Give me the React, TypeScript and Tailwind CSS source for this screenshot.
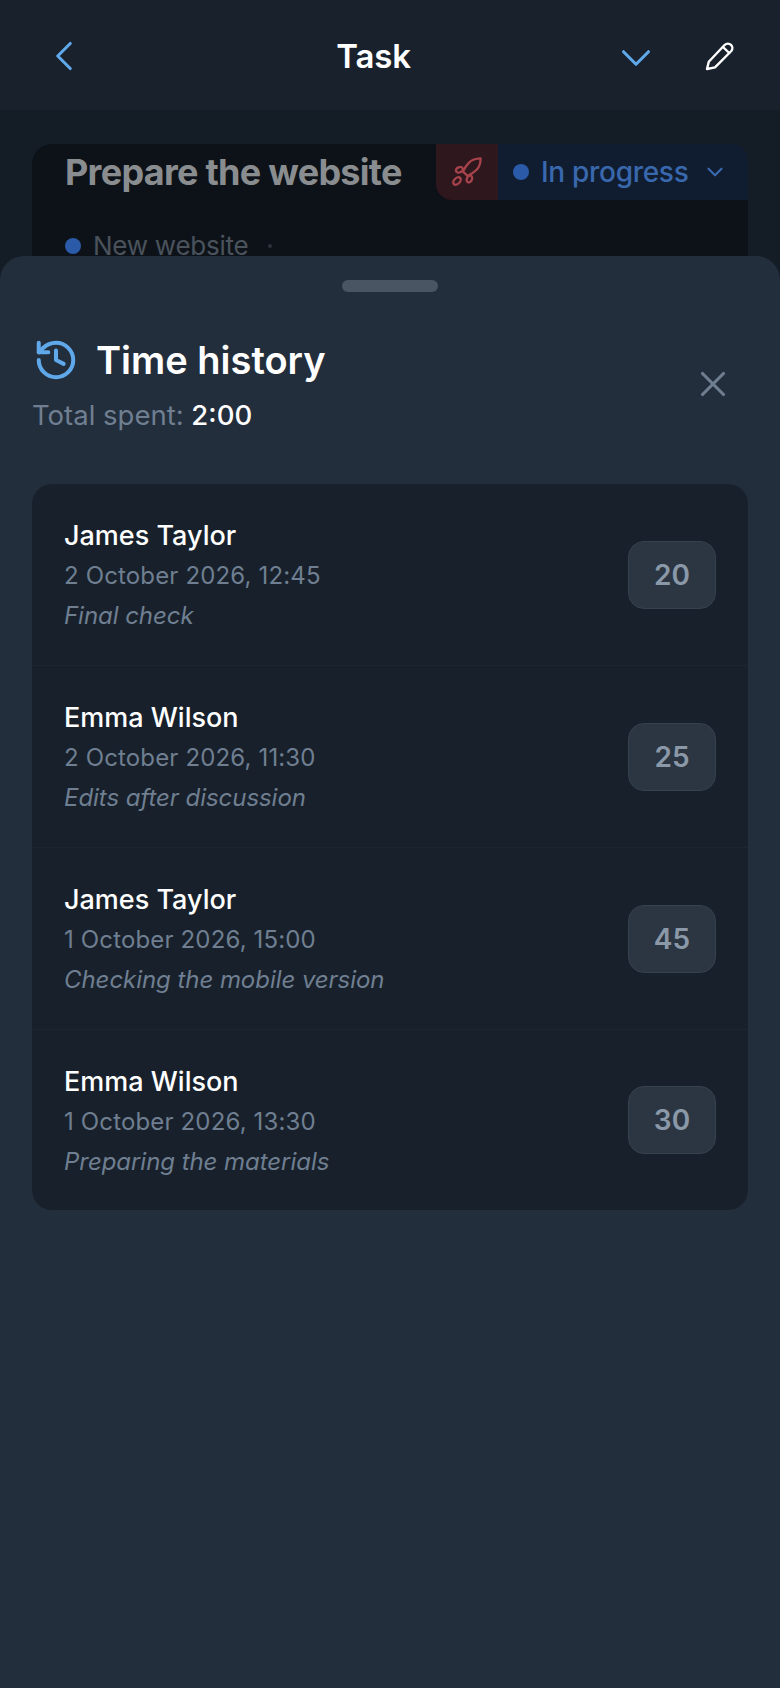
import { ChevronDown, ChevronLeft, History, X } from "lucide-react";

const ENTRIES = [
  { name: "James Taylor", date: "2 October 2026, 12:45", note: "Final check", minutes: 20 },
  { name: "Emma Wilson", date: "2 October 2026, 11:30", note: "Edits after discussion", minutes: 25 },
  { name: "James Taylor", date: "1 October 2026, 15:00", note: "Checking the mobile version", minutes: 45 },
  { name: "Emma Wilson", date: "1 October 2026, 13:30", note: "Preparing the materials", minutes: 30 },
];

function PencilIcon() {
  return (
    <svg viewBox="0 0 30 30" fill="none" stroke="currentColor" strokeWidth={2.4} strokeLinecap="round" strokeLinejoin="round" className="h-[30px] w-[30px] text-white">
      <path d="M2 28 L3.8 20.8 L19.8 3.8 a4.5 4.5 0 0 1 6.5 6.2 L10 26.4 Z" />
      <path d="M18 6 L24.2 12" />
    </svg>
  );
}

function RocketIcon() {
  return (
    <svg viewBox="0 0 30 30" fill="none" stroke="currentColor" strokeWidth={2.3} strokeLinecap="round" strokeLinejoin="round" className="h-[30px] w-[30px] text-[#a8434b]">
      <path d="M28.6 1.4 C23.5 1.6 19.6 3 17 5.6 C14.4 8.2 12.4 11.4 11 14.6 L15.6 18.8 C18.8 17.4 22 15.4 24.6 12.8 C27.2 10.2 28.6 6.4 28.6 1.4 Z" />
      <ellipse cx="7.4" cy="12.8" rx="3.6" ry="2.6" transform="rotate(-20 7.4 12.8)" />
      <ellipse cx="17.4" cy="22" rx="3.6" ry="2.6" transform="rotate(-65 17.4 22)" />
      <ellipse cx="5" cy="24" rx="4.4" ry="2.9" transform="rotate(-45 5 24)" />
    </svg>
  );
}

function Header() {
  return (
    <header className="flex h-[110px] items-center justify-between bg-[#18212c] pl-[39px] pr-[45px] pt-[2px]">
      <ChevronLeft className="h-[50px] w-[50px] text-[#5fa8ea]" strokeWidth={1.5} />
      <h1 className="ml-[47px] text-[33px] font-semibold leading-none tracking-[-0.2px] text-white">Task</h1>
      <div className="flex items-center gap-[44px]">
        <ChevronDown className="h-[50px] w-[50px] translate-y-[2px] text-[#5fa8ea]" strokeWidth={1.5} />
        <PencilIcon />
      </div>
    </header>
  );
}

function TaskCard() {
  return (
    <div className="mx-[32px] mt-[34px] h-[200px] rounded-t-[20px] bg-[#0d1219]">
      <div className="flex h-[56px] items-center justify-between">
        <h2 className="pl-[33px] text-[36px] font-bold leading-none tracking-[-0.72px] text-[#8a8d8f]">Prepare the website</h2>
        <div className="flex h-full w-[312px] overflow-hidden rounded-bl-[16px] rounded-tr-[16px]">
          <div className="flex w-[62px] items-center justify-center bg-[#2e171d]">
            <RocketIcon />
          </div>
          <div className="flex flex-1 items-center bg-[#101d30] pl-[15px]">
            <span className="h-[16px] w-[16px] rounded-full bg-[#2a5aa8]" />
            <span className="ml-[12px] text-[28px] font-medium leading-none tracking-[-0.3px] text-[#3a68ae]">In progress</span>
            <ChevronDown className="ml-[14px] h-[26px] w-[26px] text-[#3a68ae]" strokeWidth={2} />
          </div>
        </div>
      </div>
      <div className="mt-[33px] flex items-center pl-[33px]">
        <span className="h-[16px] w-[16px] rounded-full bg-[#2a5aa8]" />
        <span className="ml-[12px] text-[26px] leading-none tracking-[-0.25px] text-[#4a525c]">New website</span>
        <span className="ml-[20px] h-[4px] w-[4px] rounded-full bg-[#2c333c]" />
      </div>
    </div>
  );
}

function HistoryRow({ name, date, note, minutes }: (typeof ENTRIES)[number]) {
  return (
    <li className="flex h-[182px] items-center justify-between border-b border-[#1c2530] px-[32px] last:h-[180px] last:border-b-0">
      <div className="pt-[3px]">
        <p className="text-[27px] font-medium leading-[40px] text-white">{name}</p>
        <p className="text-[24px] leading-[40px] tracking-[0.15px] text-[#6f7f91]">{date}</p>
        <p className="text-[24px] italic leading-[40px] tracking-[-0.05px] text-[#6f7f91]">{note}</p>
      </div>
      <div className="flex h-[68px] w-[88px] items-center justify-center rounded-[16px] border border-[#36414e] bg-[#2b3642] text-[28px] font-semibold text-[#8a98a8]">
        {minutes}
      </div>
    </li>
  );
}

export default function App() {
  return (
    <div className="relative h-[1688px] w-[780px] overflow-hidden bg-[#141c26] font-['Inter',sans-serif]">
      <Header />
      <TaskCard />
      <section className="absolute inset-x-0 bottom-0 top-[256px] rounded-t-[24px] bg-[#232e3c] px-[32px]">
        <div className="mx-auto mt-[24px] h-[12px] w-[96px] rounded-full bg-[#4a5564]" />
        <div className="mt-[44px] flex justify-between">
          <div>
            <div className="flex items-center gap-[17px] pl-[1px]">
              <History className="h-[46px] w-[46px] text-[#5fa8ea]" strokeWidth={2.1} />
              <h2 className="text-[38px] font-semibold leading-[48px] text-white">Time history</h2>
            </div>
            <p className="mt-[13px] text-[27.5px] leading-[36px] text-[#6f7f91]">
              Total spent: <span className="font-medium text-white">2:00</span>
            </p>
          </div>
          <X className="mr-[14px] mt-[27px] h-[42px] w-[42px] text-[#6f7f91]" strokeWidth={1.8} />
        </div>
        <ul className="mt-[51px] overflow-hidden rounded-[20px] bg-[#18212b]">
          {ENTRIES.map((entry, i) => (
            <HistoryRow key={i} {...entry} />
          ))}
        </ul>
      </section>
    </div>
  );
}
